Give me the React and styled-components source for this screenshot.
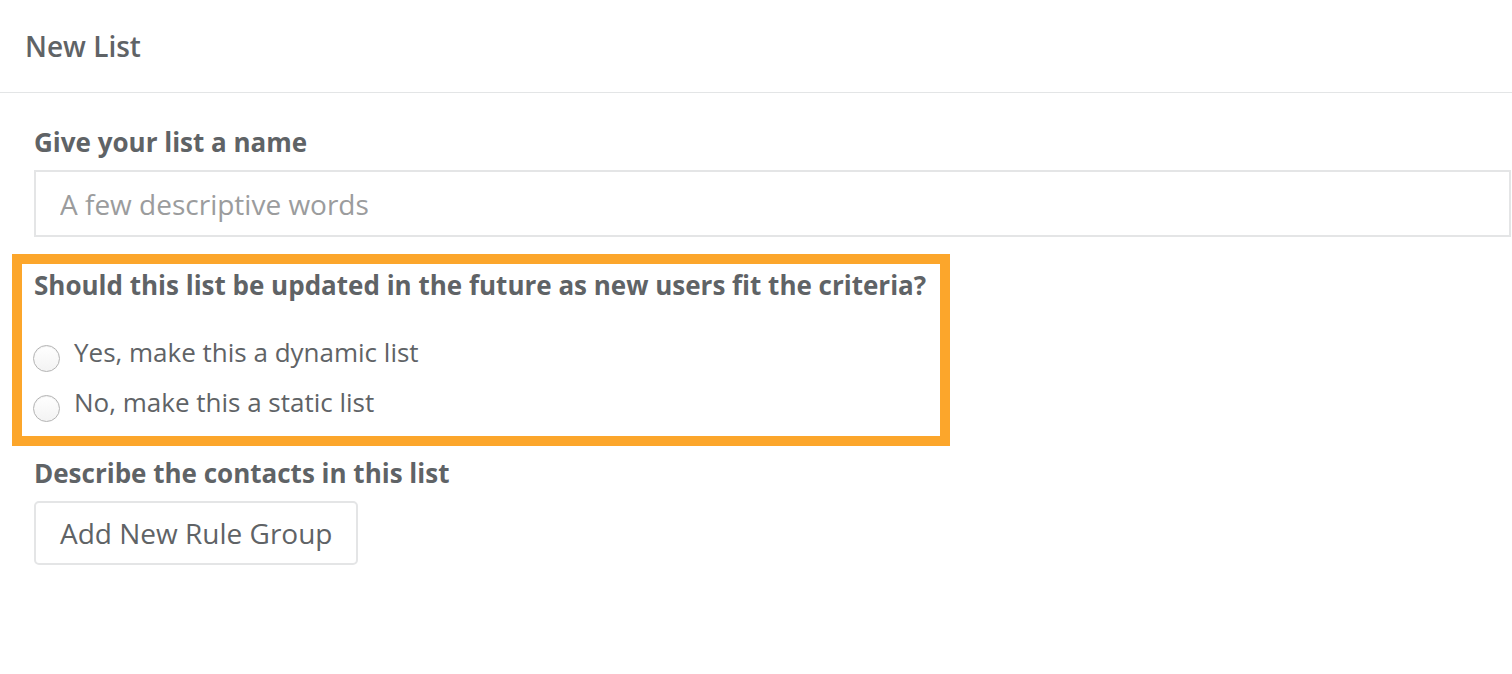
import React from "react";
import styled, { createGlobalStyle } from "styled-components";

const GlobalStyle = createGlobalStyle`
  * { box-sizing: border-box; }
  body {
    margin: 0;
    background: #fff;
    font-family: "Open Sans", "Noto Sans", sans-serif;
    color: #5f6366;
  }
`;

const options = [
  { id: "dynamic", label: "Yes, make this a dynamic list" },
  { id: "static", label: "No, make this a static list" },
];

const App = () => {
  return (
    <>
      <GlobalStyle />
      <Header>
        <Title>New List</Title>
      </Header>
      <Form>
        <Label>Give your list a name</Label>
        <TextInput placeholder="A few descriptive words" />
        <Highlight>
          <Question>Should this list be updated in the future as new users fit the criteria?</Question>
          <RadioList>
            {options.map((opt) => (
              <RadioRow key={opt.id}>
                <Radio type="radio" name="kind" value={opt.id} />
                {opt.label}
              </RadioRow>
            ))}
          </RadioList>
        </Highlight>
        <Label $top={11}>Describe the contacts in this list</Label>
        <Button>Add New Rule Group</Button>
      </Form>
    </>
  );
};

const Header = styled.header`
  display: flex;
  align-items: center;
  height: 93px;
  padding: 0 25px;
  border-bottom: 1px solid #e3e5e6;
`;

const Title = styled.h1`
  margin: 0;
  font-size: 28px;
  font-weight: 600;
  line-height: 36px;
  color: #5f6366;
`;

const Form = styled.main`
  display: flex;
  flex-direction: column;
  align-items: flex-start;
  padding: 33px 1px 40px 34px;
`;

const Label = styled.div`
  margin-top: ${(p) => p.$top || 0}px;
  font-size: 26px;
  font-weight: 700;
  line-height: 32px;
`;

const TextInput = styled.input`
  width: 100%;
  height: 67px;
  margin-top: 12px;
  padding: 0 24px;
  border: 2px solid #e4e5e6;
  border-radius: 0;
  font-family: inherit;
  font-size: 28px;
  color: #5f6366;
  outline: none;
  &::placeholder {
    color: #9b9c9d;
  }
`;

const Highlight = styled.section`
  width: 938px;
  margin: 17px 0 0 -22px;
  padding: 5px 12px 18px;
  border: 10px solid #fca62b;
`;

const Question = styled.div`
  font-size: 26px;
  font-weight: 700;
  line-height: 32px;
  white-space: nowrap;
`;

const RadioList = styled.div`
  display: flex;
  flex-direction: column;
  gap: 18px;
  margin-top: 35px;
`;

const RadioRow = styled.label`
  display: flex;
  align-items: center;
  gap: 14px;
  font-size: 26px;
  line-height: 32px;
`;

const Radio = styled.input`
  appearance: none;
  flex: none;
  width: 27px;
  height: 27px;
  margin: 6px 0 -6px -1px;
  border-radius: 50%;
  border: 1px solid #b3b3b3;
  background: linear-gradient(#ffffff, #f3f3f3);
  box-shadow: inset 0 1px 1px rgba(0, 0, 0, 0.06);
`;

const Button = styled.button`
  display: flex;
  align-items: center;
  height: 64px;
  margin-top: 12px;
  padding: 0 24px;
  background: #fff;
  border: 2px solid #e4e5e6;
  border-radius: 5px;
  font-family: inherit;
  font-size: 28px;
  color: #5f6366;
  cursor: pointer;
`;

export default App;
